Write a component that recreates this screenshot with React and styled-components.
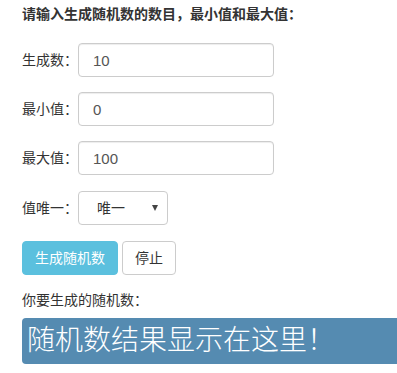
import React from "react";
import styled, { createGlobalStyle } from "styled-components";

const GlobalStyle = createGlobalStyle`
  html, body {
    margin: 0;
    padding: 0;
    background: #fff;
    overflow: hidden;
  }
  body {
    font-family: "Liberation Sans", "Noto Sans CJK SC", sans-serif;
    font-size: 14px;
    line-height: 20px;
    color: #333;
  }
`;

const Page = styled.div`
  padding: 4px 0 0 22px;
`;

const Title = styled.div`
  font-weight: bold;
  margin-bottom: 19px;
`;

const Row = styled.div`
  display: flex;
  align-items: center;
  margin-bottom: ${(p) => p.gap || 15}px;
`;

const Label = styled.label`
  width: 56px;
  flex: none;
`;

const Input = styled.input`
  box-sizing: border-box;
  width: 196px;
  height: 34px;
  padding: 6px 12px 6px 14px;
  border: 1px solid #ccc;
  border-radius: 4px;
  font: inherit;
  font-size: 15px;
  color: #555;
  outline: none;
  box-shadow: inset 0 1px 1px rgba(0, 0, 0, 0.075);
`;

const Select = styled.div`
  box-sizing: border-box;
  width: 90px;
  height: 34px;
  padding: 0 9px 0 18px;
  border: 1px solid #ccc;
  border-radius: 4px;
  display: flex;
  align-items: center;
  justify-content: space-between;
  color: #333;
`;

const Buttons = styled.div`
  display: flex;
  gap: 4px;
  margin-bottom: 15px;
`;

const Button = styled.button`
  box-sizing: border-box;
  height: 34px;
  padding: 6px 12px;
  border-radius: 4px;
  font: inherit;
  cursor: pointer;
  border: 1px solid ${(p) => (p.info ? "#5bc0de" : "#ccc")};
  background: ${(p) => (p.info ? "#5bc0de" : "#fff")};
  color: ${(p) => (p.info ? "#fff" : "#333")};
`;

const Caption = styled.div`
  margin-bottom: 8px;
`;

const Result = styled.div`
  box-sizing: border-box;
  width: 375px;
  height: 46px;
  padding: 0 5px;
  display: flex;
  align-items: center;
  background: #558bb1;
  border-radius: 4px 0 0 4px;
  color: #fff;
  font-size: 28px;
  font-weight: 300;
  line-height: 1;
`;

export default function App() {
  return (
    <Page>
      <GlobalStyle />
      <Title>请输入生成随机数的数目，最小值和最大值：</Title>
      <Row>
        <Label>生成数：</Label>
        <Input defaultValue="10" />
      </Row>
      <Row>
        <Label>最小值：</Label>
        <Input defaultValue="0" />
      </Row>
      <Row gap={16}>
        <Label>最大值：</Label>
        <Input defaultValue="100" />
      </Row>
      <Row gap={16}>
        <Label>值唯一：</Label>
        <Select>
          <span>唯一</span>
          <svg width="6" height="6" viewBox="0 0 6 6">
            <path d="M0 0 H6 L3 6 Z" fill="#444" />
          </svg>
        </Select>
      </Row>
      <Buttons>
        <Button info>生成随机数</Button>
        <Button>停止</Button>
      </Buttons>
      <Caption>你要生成的随机数：</Caption>
      <Result>随机数结果显示在这里！</Result>
    </Page>
  );
}
